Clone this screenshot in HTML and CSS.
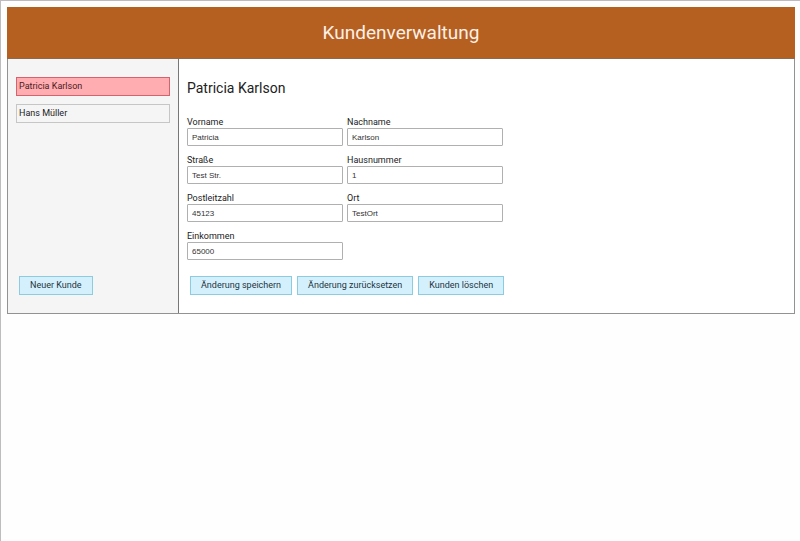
FILE: index.html
```html
<!DOCTYPE html>
<html lang="de">
<head>
<meta charset="utf-8">
<title>Kundenverwaltung</title>
<link rel="stylesheet" href="styles.css">
</head>
<body>
<div class="app">
  <header class="app-header"><h1>Kundenverwaltung</h1></header>
  <div class="app-body">
    <nav class="sidebar">
      <div class="customers">
        <button type="button" class="customer customer-active">Patricia Karlson</button>
        <button type="button" class="customer">Hans Müller</button>
      </div>
      <div class="actions"><button type="button" class="btn">Neuer Kunde</button></div>
    </nav>
    <main class="detail">
      <h2>Patricia Karlson</h2>
      <form class="form">
        <div class="fields">
          <div class="field"><label for="vorname">Vorname</label><input id="vorname" type="text" value="Patricia"></div>
          <div class="field"><label for="nachname">Nachname</label><input id="nachname" type="text" value="Karlson"></div>
          <div class="field"><label for="strasse">Straße</label><input id="strasse" type="text" value="Test Str."></div>
          <div class="field"><label for="hausnummer">Hausnummer</label><input id="hausnummer" type="text" value="1"></div>
          <div class="field"><label for="plz">Postleitzahl</label><input id="plz" type="text" value="45123"></div>
          <div class="field"><label for="ort">Ort</label><input id="ort" type="text" value="TestOrt"></div>
          <div class="field"><label for="einkommen">Einkommen</label><input id="einkommen" type="text" value="65000"></div>
        </div>
        <div class="actions">
          <button type="button" class="btn">Änderung speichern</button>
          <button type="button" class="btn">Änderung zurücksetzen</button>
          <button type="button" class="btn">Kunden löschen</button>
        </div>
      </form>
    </main>
  </div>
</div>
</body>
</html>
```
FILE: styles.css
```css
* {
  box-sizing: border-box;
}

body {
  margin: 0;
  min-height: 100vh;
  padding: 6px 5px 6px 6px;
  border-top: 1px solid #bfbabd;
  border-left: 1px solid #bdbdbd;
  background: #fefefe;
  color: #222;
  font: 9px/11px Roboto, sans-serif;
}

h1,
h2 {
  margin: 0;
  font-weight: 400;
}

.app {
  border: 1px solid #929292;
  border-top: 0;
  background: #fff;
}

.app-header {
  margin: 0 -1px;
  padding: 14px;
  border-bottom: 1px solid #8b6a50;
  background: #b55f21;
  color: #fdf0e6;
  text-align: center;
}

h1 {
  font-size: 19px;
  line-height: 23px;
}

.app-body {
  display: flex;
}

.sidebar {
  display: flex;
  flex: 0 0 171px;
  flex-direction: column;
  justify-content: space-between;
  padding: 18px 8px;
  border-right: 1px solid #777;
  background: #f5f5f5;
}

.customers {
  display: flex;
  flex-direction: column;
  gap: 8px;
}

.customer {
  padding: 3px 2px;
  border: 1px solid #c6c6c6;
  background: #f5f5f5;
  color: #222;
  font: inherit;
  text-align: left;
}

.customer-active {
  border-color: #d5626d;
  background: #ffadb0;
  color: #4c2023;
}

.detail {
  flex: 1;
  padding: 18px 8px;
}

h2 {
  margin-bottom: 17px;
  font-size: 14px;
  line-height: 23px;
}

.fields {
  display: grid;
  grid-template-columns: repeat(2, 156px);
  gap: 9px 4px;
  margin-bottom: 16px;
}

.field {
  display: flex;
  flex-direction: column;
}

.field input {
  width: 100%;
  height: 18px;
  padding: 0 4px;
  border: 1px solid #b0b0b0;
  border-radius: 1px;
  background: #fff;
  color: #333;
  font: 8px "Liberation Sans", sans-serif;
}

.actions {
  display: flex;
  gap: 5px;
  padding: 0 3px;
}

.btn {
  padding: 3px 10px;
  border: 1px solid #8ccbe0;
  background: #d5f0fd;
  color: #1d3540;
  font: inherit;
}
```
